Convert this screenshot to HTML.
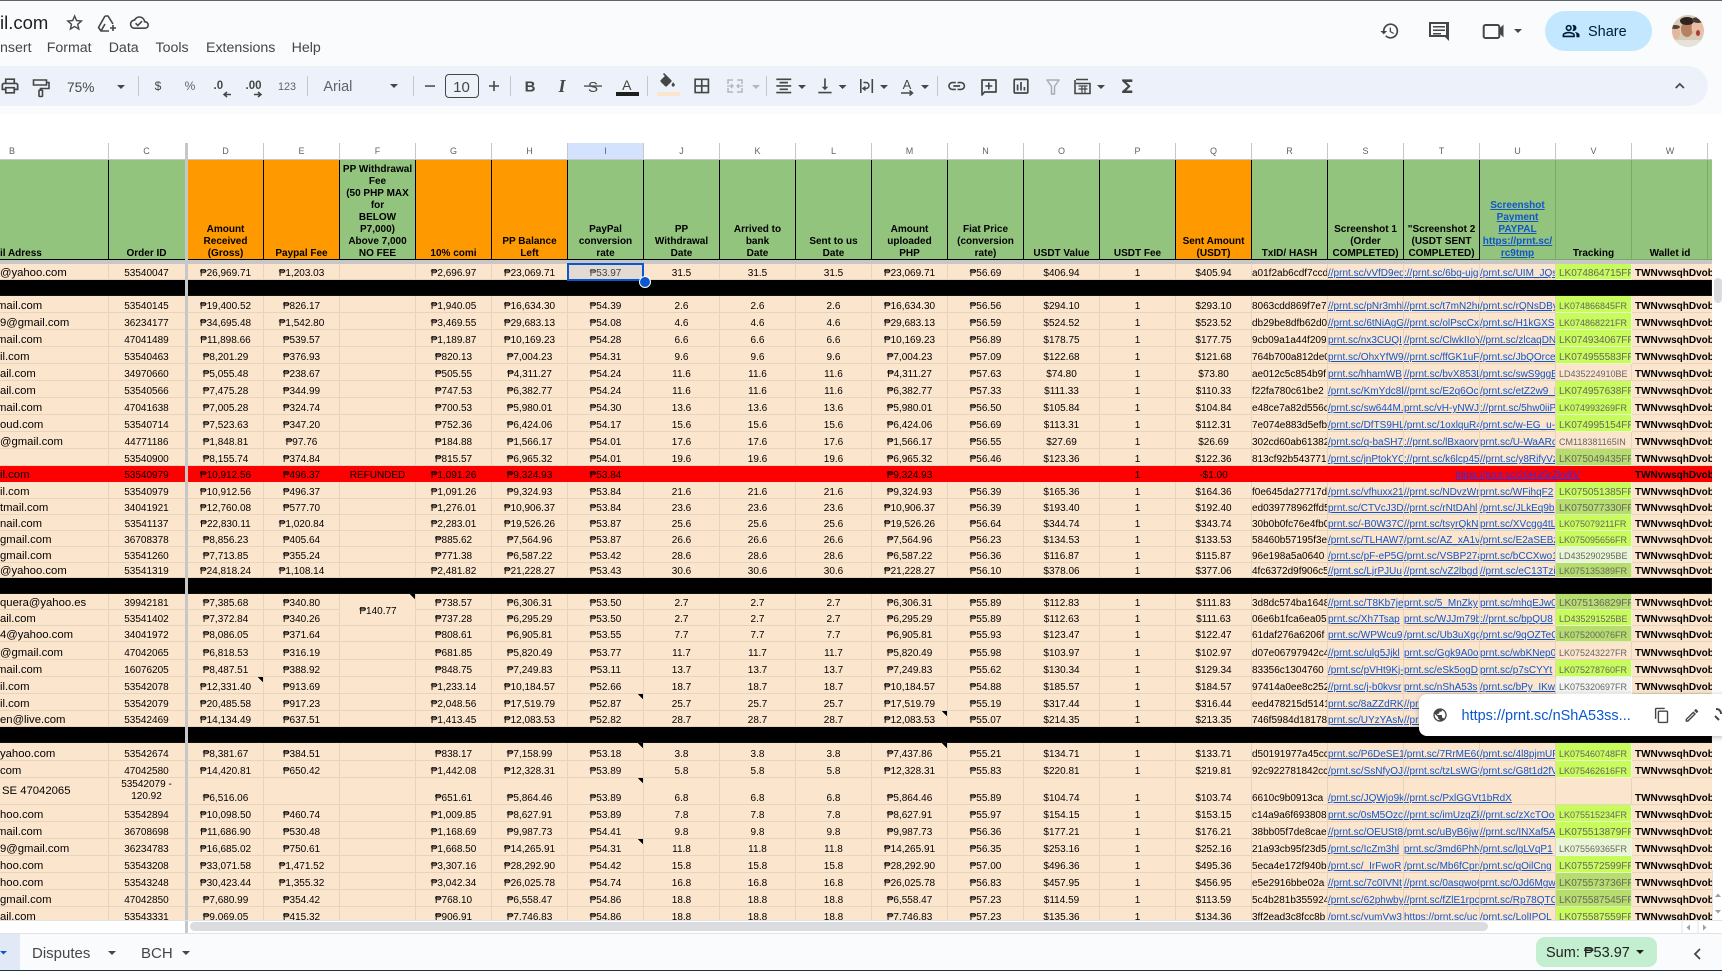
<!DOCTYPE html>
<html><head><meta charset="utf-8"><title>Sheet</title>
<style>
html,body{margin:0;padding:0;width:1722px;height:971px;overflow:hidden;background:#f9fbfd;font-family:"Liberation Sans",Arial,sans-serif}
#wh{position:absolute;left:0;top:114px;width:1722px;height:820px;background:#fff}
#g{position:absolute;left:0;top:143px;width:1712px;height:777px;overflow:hidden;filter:blur(.3px)}
table{border-collapse:separate;border-spacing:0;table-layout:fixed;width:1712px;font:10px/12px "Liberation Sans",Arial,sans-serif;color:#000}
td{padding:0;overflow:hidden;white-space:nowrap;text-align:center;vertical-align:bottom;border-right:1px solid #e6d4bc;border-bottom:1px solid #e6d4bc}
.c td{height:16px;background:#fff;color:#5f6368;font-size:9px;vertical-align:middle;border-top:0;border-right:1px solid #c4c7c5;border-bottom:1px solid #c4c7c5}
.c .on{background:#d3e3fd}
.c td:last-child,.h td:last-child{padding-right:4px;border-right:0}
.h td{height:100px;background:#93c47d;font-weight:bold;white-space:normal;border-right:1px solid #000;border-bottom:0;box-shadow:inset 0 -1px 0 #000}
.h td.o{background:#ff9900}
.h td.u{color:#1155cc;text-decoration:underline;border-right-color:#7ea86a;box-shadow:inset 0 -1px 0 #7ea86a}
.h td.v{border-right-color:#7ea86a;box-shadow:inset 0 -1px 0 #7ea86a;white-space:nowrap}
.h td:first-child{text-align:left;white-space:nowrap}
.f td{height:4px;background:#c7c7c7;border:0;font-size:0;line-height:0}
.d{height:16px;background:#fce5cd}
.s{height:17px}
.d td{background-color:#fce5cd;line-height:11px}
.d td:first-child{text-align:left;font-size:11.3px;line-height:11px}
.d td:nth-child(2){padding-right:3px}
.d td:nth-child(n+17){text-align:left}
.d td:nth-child(18),.d td:nth-child(19),.d td:nth-child(20){color:#1155cc;text-decoration:underline}
.d td:nth-child(21){color:#666;padding-left:3px}
.d td:last-child{font-weight:bold;color:#000;text-decoration:none;border-right:0;padding-left:3px;text-align:left}
.d td.l{background-color:#c8fb5c;border-color:#e9f9c4}
.d td.m{background-color:#b7dd6e;border-color:#dcefb8}
.d td.p{background-color:#e9f6d5;border-color:#f0f6e4}
.d td.w{background-color:#f3f5f2;border-color:#fff}
.d td.t{font-size:9px}
.k{height:16px}
.k td{background:#000;border-color:#111}
.r td{background-color:#f00!important;border-color:#f00!important}
.r td:nth-child(19){text-align:center!important;color:#2f2fe0!important}
.n{background-image:linear-gradient(225deg,#000 3.6px,transparent 3.6px);background-repeat:no-repeat}
.i{text-indent:-3px}
#gut{position:absolute;left:185px;top:143px;width:3px;height:790px;background:#c7c7c7}
#sel{position:absolute;left:567px;top:263px;width:77px;height:18px;box-sizing:border-box;border:2px solid #0b57d0}
#hd{position:absolute;left:639px;top:276px;width:10px;height:10px;border-radius:50%;background:#0b57d0;border:1px solid #fff;box-sizing:content-box}
#fee{position:absolute;left:340px;top:606px;width:76px;text-align:center;font:10px/12px "Liberation Sans",Arial,sans-serif}
#bl{position:absolute;left:0;top:920px;width:1722px;height:1px;background:#e3e3e3}
#th{position:absolute;left:190px;top:922px;width:1298px;height:9px;border-radius:5px;background:#dadce0}
#vt{position:absolute;left:1714px;top:278px;width:8px;height:25px;border-radius:4px;background:#dadce0}
#bot{position:absolute;left:0;top:933px;width:1722px;height:37px;background:#f9fbfd;border-top:1px solid #e3e3e3;box-sizing:border-box}
#end{position:absolute;left:0;top:970px;width:1722px;height:1px;background:#1c3440}
#top{position:absolute;left:0;top:0;width:1722px;height:1px;background:#5f6368}
#ov{position:absolute;left:0;top:0;z-index:5}
#ov text{font-family:"Liberation Sans",Arial,sans-serif}
</style></head><body>
<div id="wh"></div>
<div id="g"><table>
<colgroup><col style="width:109px"><col style="width:79px"><col span="19" style="width:76px"><col style="width:80px"></colgroup>
<tr class="c"><td style="text-align:left;padding-left:9px">B<td style="padding-right:3px">C<td>D<td>E<td>F<td>G<td>H<td class="on">I<td>J<td>K<td>L<td>M<td>N<td>O<td>P<td>Q<td>R<td>S<td>T<td>U<td>V<td>W</tr>
<tr class="h"><td>il Adress<td style="padding-right:3px">Order ID<td class="o">Amount<br>Received<br>(Gross)<td class="o">Paypal Fee<td>PP Withdrawal<br>Fee<br>(50 PHP MAX<br>for<br>BELOW<br>P7,000)<br>Above 7,000<br>NO FEE<td class="o">10% comi<td class="o">PP Balance<br>Left<td>PayPal<br>conversion<br>rate<td>PP<br>Withdrawal<br>Date<td>Arrived to<br>bank<br>Date<td>Sent to us<br>Date<td>Amount<br>uploaded<br>PHP<td>Fiat Price<br>(conversion<br>rate)<td>USDT Value<td>USDT Fee<td class="o">Sent Amount<br>(USDT)<td>TxID/ HASH<td>Screenshot 1<br>(Order<br>COMPLETED)<td>"Screenshot 2<br>(USDT SENT<br>COMPLETED)<td class="u">Screenshot<br>Payment<br>PAYPAL<br>https://prnt.sc/<br>rc9tmp<td class="v">Tracking<td class="v">Wallet id</tr>
<tr class="f"><td colspan="22"></tr>
<tr class="d"><td>@yahoo.com<td>53540047<td>₱26,969.71<td>₱1,203.03<td><td>₱2,696.97<td>₱23,069.71<td style="background-color:#e3dbd3;color:#444">₱53.97<td>31.5<td>31.5<td>31.5<td>₱23,069.71<td>₱56.69<td>$406.94<td>1<td style="text-align:center">$405.94<td>a01f2ab6cdf7ccd<td>//prnt.sc/vVfD9ed<td>://prnt.sc/6bg-ujg<td>/prnt.sc/UIM_JQs<td class="l">LK074864715FF<td>TWNvwsqhDvob</tr>
<tr class="k"><td colspan="22"></tr>
<tr class="d s"><td class="i">mail.com<td>53540145<td>₱19,400.52<td>₱826.17<td><td>₱1,940.05<td>₱16,634.30<td>₱54.39<td>2.6<td>2.6<td>2.6<td>₱16,634.30<td>₱56.56<td>$294.10<td>1<td style="text-align:center">$293.10<td>8063cdd869f7e7<td>//prnt.sc/pNr3mhl<td>//prnt.sc/t7mN2hr<td>/prnt.sc/rQNsDBy<td class="l t">LK074866845FR<td>TWNvwsqhDvob</tr>
<tr class="d s"><td>9@gmail.com<td>36234177<td>₱34,695.48<td>₱1,542.80<td><td>₱3,469.55<td>₱29,683.13<td>₱54.08<td>4.6<td>4.6<td>4.6<td>₱29,683.13<td>₱56.59<td>$524.52<td>1<td style="text-align:center">$523.52<td>db29be8dfb62d09<td>//prnt.sc/6tNiAgG<td>//prnt.sc/olPscCx<td>/prnt.sc/H1kGXS<td class="l t">LK074868221FR<td>TWNvwsqhDvob</tr>
<tr class="d s"><td class="i">mail.com<td>47041489<td>₱11,898.66<td>₱539.57<td><td>₱1,189.87<td>₱10,169.23<td>₱54.28<td>6.6<td>6.6<td>6.6<td>₱10,169.23<td>₱56.89<td>$178.75<td>1<td style="text-align:center">$177.75<td>9cb09a1a44f209a<td>prnt.sc/nx3CUQI<td>//prnt.sc/ClwkIIoY<td>//prnt.sc/zlcaqDN<td class="l">LK074934067FF<td>TWNvwsqhDvob</tr>
<tr class="d s"><td>il.com<td>53540463<td>₱8,201.29<td>₱376.93<td><td>₱820.13<td>₱7,004.23<td>₱54.31<td>9.6<td>9.6<td>9.6<td>₱7,004.23<td>₱57.09<td>$122.68<td>1<td style="text-align:center">$121.68<td>764b700a812de0<td>prnt.sc/OhxYfW9<td>//prnt.sc/ffGK1uF<td>/prnt.sc/JbQOrce<td class="l">LK074955583FF<td>TWNvwsqhDvob</tr>
<tr class="d s"><td>ail.com<td>34970660<td>₱5,055.48<td>₱238.67<td><td>₱505.55<td>₱4,311.27<td>₱54.24<td>11.6<td>11.6<td>11.6<td>₱4,311.27<td>₱57.63<td>$74.80<td>1<td style="text-align:center">$73.80<td>ae012c5c854b9f<td>prnt.sc/hhamWB<td>//prnt.sc/bvX853L<td>/prnt.sc/swS9ggB<td class="t">LD435224910BE<td>TWNvwsqhDvob</tr>
<tr class="d s"><td>ail.com<td>53540566<td>₱7,475.28<td>₱344.99<td><td>₱747.53<td>₱6,382.77<td>₱54.24<td>11.6<td>11.6<td>11.6<td>₱6,382.77<td>₱57.33<td>$111.33<td>1<td style="text-align:center">$110.33<td>f22fa780c61be2<td>/prnt.sc/KmYdc8k<td>//prnt.sc/E2q6Oc<td>/prnt.sc/etZ2w9_I<td class="l">LK074957638FF<td>TWNvwsqhDvob</tr>
<tr class="d s"><td class="i">mail.com<td>47041638<td>₱7,005.28<td>₱324.74<td><td>₱700.53<td>₱5,980.01<td>₱54.30<td>13.6<td>13.6<td>13.6<td>₱5,980.01<td>₱56.50<td>$105.84<td>1<td style="text-align:center">$104.84<td>e48ce7a82d556c<td>/prnt.sc/sw644M.<td>prnt.sc/vH-yNWJ<td>://prnt.sc/5hw0iiP<td class="l t">LK074993269FR<td>TWNvwsqhDvob</tr>
<tr class="d s"><td>oud.com<td>53540714<td>₱7,523.63<td>₱347.20<td><td>₱752.36<td>₱6,424.06<td>₱54.17<td>15.6<td>15.6<td>15.6<td>₱6,424.06<td>₱56.69<td>$113.31<td>1<td style="text-align:center">$112.31<td>7e074e883d5efbf<td>/prnt.sc/DfTS9HL<td>/prnt.sc/1oxlquR4<td>/prnt.sc/w-EG_u-1<td class="l">LK074995154FF<td>TWNvwsqhDvob</tr>
<tr class="d s"><td>@gmail.com<td class="n" style="background-position:right -3px top 0">44771186<td>₱1,848.81<td>₱97.76<td><td>₱184.88<td>₱1,566.17<td>₱54.01<td>17.6<td>17.6<td>17.6<td>₱1,566.17<td>₱56.55<td>$27.69<td>1<td style="text-align:center">$26.69<td>302cd60ab61382<td>/prnt.sc/q-baSH7<td>://prnt.sc/lBxaorv<td>prnt.sc/U-WaARc<td class="t">CM118381165IN<td>TWNvwsqhDvob</tr>
<tr class="d s"><td><td>53540900<td>₱8,155.74<td>₱374.84<td><td>₱815.57<td>₱6,965.32<td>₱54.01<td>19.6<td>19.6<td>19.6<td>₱6,965.32<td>₱56.46<td>$123.36<td>1<td style="text-align:center">$122.36<td>813cf92b543771<td>/prnt.sc/jnPtokYC<td>://prnt.sc/k6lcp45<td>//prnt.sc/y8RifyVz<td class="m">LK075049435FF<td>TWNvwsqhDvob</tr>
<tr class="d r"><td>il.com<td>53540979<td>₱10,912.56<td>₱496.37<td>REFUNDED<td>₱1,091.26<td>₱9,324.93<td>₱53.84<td><td><td><td>₱9,324.93<td><td><td>1<td style="text-align:center">-$1.00<td><td><td colspan="3">https://prnt.sc/20H3SrZkvlfV<td>TWNvwsqhDvob</tr>
<tr class="d s"><td>il.com<td>53540979<td>₱10,912.56<td>₱496.37<td><td>₱1,091.26<td>₱9,324.93<td>₱53.84<td>21.6<td>21.6<td>21.6<td>₱9,324.93<td>₱56.39<td>$165.36<td>1<td style="text-align:center">$164.36<td>f0e645da27717d<td>/prnt.sc/vfhuxx21<td>//prnt.sc/NDvzWn<td>prnt.sc/WFihqF2<td class="l">LK075051385FF<td>TWNvwsqhDvob</tr>
<tr class="d"><td>tmail.com<td>34041921<td>₱12,760.08<td>₱577.70<td><td>₱1,276.01<td>₱10,906.37<td>₱53.84<td>23.6<td>23.6<td>23.6<td>₱10,906.37<td>₱56.39<td>$193.40<td>1<td style="text-align:center">$192.40<td>ed039778962ffd5<td>prnt.sc/CTVcJ3D<td>//prnt.sc/rNtDAhl<td>/prnt.sc/JLkEq9b<td class="m">LK075077330FF<td>TWNvwsqhDvob</tr>
<tr class="d"><td>nail.com<td>53541137<td>₱22,830.11<td>₱1,020.84<td><td>₱2,283.01<td>₱19,526.26<td>₱53.87<td>25.6<td>25.6<td>25.6<td>₱19,526.26<td>₱56.64<td>$344.74<td>1<td style="text-align:center">$343.74<td>30b0b0fc76e4fb0<td>prnt.sc/-B0W37C<td>//prnt.sc/tsyrQkN<td>prnt.sc/XVcgg4tL<td class="l t">LK075079211FR<td>TWNvwsqhDvob</tr>
<tr class="d"><td>gmail.com<td>36708378<td>₱8,856.23<td>₱405.64<td><td>₱885.62<td>₱7,564.96<td>₱53.87<td>26.6<td>26.6<td>26.6<td>₱7,564.96<td>₱56.23<td>$134.53<td>1<td style="text-align:center">$133.53<td>58460b57195f3e<td>/prnt.sc/TLHAW7<td>/prnt.sc/AZ_xA1v<td>/prnt.sc/E2aSEBz<td class="l t">LK075095656FR<td>TWNvwsqhDvob</tr>
<tr class="d"><td>gmail.com<td>53541260<td>₱7,713.85<td>₱355.24<td><td>₱771.38<td>₱6,587.22<td>₱53.42<td>28.6<td>28.6<td>28.6<td>₱6,587.22<td>₱56.36<td>$116.87<td>1<td style="text-align:center">$115.87<td>96e198a5a0640<td>/prnt.sc/pF-eP5G<td>/prnt.sc/VSBP27a<td>prnt.sc/bCCXwo1<td class="p t">LD435290295BE<td>TWNvwsqhDvob</tr>
<tr class="d" style="height:15px"><td>@yahoo.com<td>53541319<td>₱24,818.24<td>₱1,108.14<td><td>₱2,481.82<td>₱21,228.27<td>₱53.43<td>30.6<td>30.6<td>30.6<td>₱21,228.27<td>₱56.10<td>$378.06<td>1<td style="text-align:center">$377.06<td>4fc6372d9f906c5<td>//prnt.sc/LjrPJUu<td>//prnt.sc/vZ2lbgd<td>//prnt.sc/eC13Tzi<td class="m t">LK075135389FR<td>TWNvwsqhDvob</tr>
<tr class="k"><td colspan="22"></tr>
<tr class="d"><td>quera@yahoo.es<td>39942181<td>₱7,385.68<td>₱340.80<td class="n" style="border-bottom-color:#fce5cd"><td>₱738.57<td>₱6,306.31<td>₱53.50<td>2.7<td>2.7<td>2.7<td>₱6,306.31<td>₱55.89<td>$112.83<td>1<td style="text-align:center">$111.83<td>3d8dc574ba1648<td>//prnt.sc/T8Kb7je<td>prnt.sc/5_MnZky<td>prnt.sc/mhqEJw0<td class="m">LK075136829FF<td>TWNvwsqhDvob</tr>
<tr class="d"><td>ail.com<td>53541402<td>₱7,372.84<td>₱340.26<td><td>₱737.28<td>₱6,295.29<td>₱53.50<td>2.7<td>2.7<td>2.7<td>₱6,295.29<td>₱55.89<td>$112.63<td>1<td style="text-align:center">$111.63<td>06e6b1fca6ea05<td>prnt.sc/Xh7Tsap<td>prnt.sc/WJJm79b<td>://prnt.sc/bpQU8<td class="l t">LD435291525BE<td>TWNvwsqhDvob</tr>
<tr class="d"><td>4@yahoo.com<td>34041972<td>₱8,086.05<td>₱371.64<td><td>₱808.61<td>₱6,905.81<td>₱53.55<td>7.7<td>7.7<td>7.7<td>₱6,905.81<td>₱55.93<td>$123.47<td>1<td style="text-align:center">$122.47<td>61daf276a6206f<td>prnt.sc/WPWcu9<td>/prnt.sc/Ub3uXgg<td>/prnt.sc/9qOZTeC<td class="m t">LK075200076FR<td>TWNvwsqhDvob</tr>
<tr class="d" style="height:18px"><td>@gmail.com<td class="n" style="background-position:right -3px top 0">47042065<td>₱6,818.53<td>₱316.19<td><td>₱681.85<td>₱5,820.49<td>₱53.77<td>11.7<td>11.7<td>11.7<td>₱5,820.49<td>₱55.98<td>$103.97<td>1<td style="text-align:center">$102.97<td>d07e06797942c4<td>//prnt.sc/ulg5Jjkl<td>prnt.sc/Ggk9A0o<td>prnt.sc/wbKNep0<td class="t">LK075243227FR<td>TWNvwsqhDvob</tr>
<tr class="d s"><td class="i">mail.com<td>16076205<td>₱8,487.51<td>₱388.92<td><td>₱848.75<td>₱7,249.83<td>₱53.11<td>13.7<td>13.7<td>13.7<td>₱7,249.83<td>₱55.62<td>$130.34<td>1<td style="text-align:center">$129.34<td>83356c1304760<td>/prnt.sc/pVHt9Kj-<td>prnt.sc/eSk5ogD<td>prnt.sc/p7sCYYt<td class="l t">LK075278760FR<td>TWNvwsqhDvob</tr>
<tr class="d s"><td>il.com<td>53542078<td class="n">₱12,331.40<td>₱913.69<td><td>₱1,233.14<td>₱10,184.57<td>₱52.66<td>18.7<td>18.7<td>18.7<td>₱10,184.57<td>₱54.88<td>$185.57<td>1<td style="text-align:center">$184.57<td>97414a0ee8c252<td>//prnt.sc/j-b0kvsr<td>prnt.sc/nShA53s<td>/prnt.sc/bPy_IKw<td class="w t">LK075320697FR<td>TWNvwsqhDvob</tr>
<tr class="d s"><td>il.com<td>53542079<td>₱20,485.58<td>₱917.23<td><td>₱2,048.56<td>₱17,519.79<td class="n">₱52.87<td>25.7<td>25.7<td>25.7<td>₱17,519.79<td>₱55.19<td>$317.44<td>1<td style="text-align:center">$316.44<td>eed478215d5141<td>prnt.sc/8aZZdRK<td>//prnt.sc/mGk2<td><td><td>TWNvwsqhDvob</tr>
<tr class="d"><td>en@live.com<td>53542469<td>₱14,134.49<td>₱637.51<td><td>₱1,413.45<td>₱12,083.53<td>₱52.82<td>28.7<td>28.7<td>28.7<td class="n">₱12,083.53<td>₱55.07<td>$214.35<td>1<td style="text-align:center">$213.35<td>746f5984d18178<td>prnt.sc/UYzYAsM<td>//prnt.sc/pL4q<td><td><td>TWNvwsqhDvob</tr>
<tr class="k"><td colspan="22"></tr>
<tr class="d" style="height:18px"><td>yahoo.com<td>53542674<td>₱8,381.67<td>₱384.51<td><td>₱838.17<td>₱7,158.99<td class="n">₱53.18<td>3.8<td>3.8<td>3.8<td class="n">₱7,437.86<td>₱55.21<td>$134.71<td>1<td style="text-align:center">$133.71<td>d50191977a45cc<td>prnt.sc/P6DeSE1<td>/prnt.sc/7RrME6C<td>/prnt.sc/4l8pjmUF<td class="l t">LK075460748FR<td>TWNvwsqhDvob</tr>
<tr class="d s"><td>com<td>47042580<td>₱14,420.81<td>₱650.42<td><td>₱1,442.08<td>₱12,328.31<td>₱53.89<td>5.8<td>5.8<td>5.8<td>₱12,328.31<td>₱55.83<td>$220.81<td>1<td style="text-align:center">$219.81<td>92c922781842cc<td>/prnt.sc/SsNfyOJ<td>//prnt.sc/tzLsWGv<td>/prnt.sc/G8t1d2fV<td class="l t">LK075462616FR<td>TWNvwsqhDvob</tr>
<tr class="d" style="height:27px"><td style="vertical-align:middle;padding-left:2px">SE 47042065<td style="white-space:normal;vertical-align:middle;line-height:12px">53542079 -<br>120.92<td>₱6,516.06<td><td><td>₱651.61<td>₱5,864.46<td class="n">₱53.89<td>6.8<td>6.8<td>6.8<td>₱5,864.46<td>₱55.89<td>$104.74<td>1<td style="text-align:center">$103.74<td>6610c9b0913ca<td>/prnt.sc/JQWjo9k<td colspan="2">//prnt.sc/PxlGGVt1bRdX<td style="background-color:#fce5cd"><td>TWNvwsqhDvob</tr>
<tr class="d s"><td>hoo.com<td>53542894<td>₱10,098.50<td>₱460.74<td><td>₱1,009.85<td>₱8,627.91<td>₱53.89<td>7.8<td>7.8<td>7.8<td>₱8,627.91<td>₱55.97<td>$154.15<td>1<td style="text-align:center">$153.15<td>c14a9a6f693808<td>prnt.sc/0sM5Ozc<td>//prnt.sc/imUzqZk<td>//prnt.sc/zXcTOo-<td class="l t">LK075515234FR<td>TWNvwsqhDvob</tr>
<tr class="d s"><td class="i">mail.com<td>36708698<td>₱11,686.90<td>₱530.48<td><td>₱1,168.69<td>₱9,987.73<td>₱54.41<td>9.8<td>9.8<td>9.8<td>₱9,987.73<td>₱56.36<td>$177.21<td>1<td style="text-align:center">$176.21<td>38bb05f7de8cae6<td>//prnt.sc/OEUSt8<td>/prnt.sc/uByB6jw<td>//prnt.sc/INXaf5A<td class="l">LK075513879FF<td>TWNvwsqhDvob</tr>
<tr class="d s"><td>9@gmail.com<td>36234783<td>₱16,685.02<td>₱750.61<td><td>₱1,668.50<td>₱14,265.91<td class="n">₱54.31<td>11.8<td>11.8<td>11.8<td>₱14,265.91<td>₱56.35<td>$253.16<td>1<td style="text-align:center">$252.16<td>21a93cb95f23d59<td>/prnt.sc/IcZm3hl<td>prnt.sc/3md6PhN<td>/prnt.sc/lgLVqP1<td class="p t">LK075569365FR<td>TWNvwsqhDvob</tr>
<tr class="d s"><td>hoo.com<td>53543208<td>₱33,071.58<td>₱1,471.52<td><td>₱3,307.16<td>₱28,292.90<td>₱54.42<td>15.8<td>15.8<td>15.8<td>₱28,292.90<td>₱57.00<td>$496.36<td>1<td style="text-align:center">$495.36<td>5eca4e172f940b<td>/prnt.sc/_IrFwoR<td>/prnt.sc/Mb6fCprs<td>/prnt.sc/qOilCng<td class="l">LK075572599FF<td>TWNvwsqhDvob</tr>
<tr class="d s"><td>hoo.com<td>53543248<td>₱30,423.44<td>₱1,355.32<td><td>₱3,042.34<td>₱26,025.78<td>₱54.74<td>16.8<td>16.8<td>16.8<td>₱26,025.78<td>₱56.83<td>$457.95<td>1<td style="text-align:center">$456.95<td>e5e2916bbe02a<td>//prnt.sc/7c0IVNt<td>//prnt.sc/0asqwo6<td>prnt.sc/0Jd6Mgw<td class="m">LK075573736FF<td>TWNvwsqhDvob</tr>
<tr class="d s"><td>gmail.com<td>47042850<td>₱7,680.99<td>₱354.42<td><td>₱768.10<td>₱6,558.47<td>₱54.86<td>18.8<td>18.8<td>18.8<td>₱6,558.47<td>₱57.23<td>$114.59<td>1<td style="text-align:center">$113.59<td>5c4b281b355924<td>/prnt.sc/62phwby<td>//prnt.sc/fZlE1rpc<td>prnt.sc/Rp78QTC<td class="m">LK075587545FF<td>TWNvwsqhDvob</tr>
<tr class="d s"><td>ail.com<td>53543331<td>₱9,069.05<td>₱415.32<td><td>₱906.91<td>₱7,746.83<td>₱54.86<td>18.8<td>18.8<td>18.8<td>₱7,746.83<td>₱57.23<td>$135.36<td>1<td style="text-align:center">$134.36<td>3ff2ead3c8fcc8b<td>/prnt.sc/yumVw3<td>https://prnt.sc/uc<td>/prnt.sc/LolIPQL<td class="l">LK075587559FF<td>TWNvwsqhDvob</tr>
</table></div>
<div id="fee">₱140.77</div>
<div id="gut"></div>
<div id="sel"></div>
<div id="hd"></div>
<div id="bl"></div>
<div id="th"></div>
<div id="vt"></div>
<div id="bot"></div>
<div id="end"></div>
<div id="top"></div>
<svg id="ov" width="1722" height="971" viewBox="0 0 1722 971" xmlns="http://www.w3.org/2000/svg">
<defs>
<clipPath id="av"><circle cx="1688" cy="31" r="16"/></clipPath>
<filter id="sh" x="-5%" y="-30%" width="110%" height="170%"><feDropShadow dx="0" dy="1" stdDeviation="3" flood-color="#000" flood-opacity=".28"/></filter>
</defs>
<!-- W right edge in header rows -->
<rect x="1707" y="143" width="1" height="17" fill="#c4c7c5"/>
<rect x="1707" y="160" width="1" height="100" fill="#7ea86a"/>
<!-- title -->
<text x="0" y="29" font-size="18.5" fill="#1f1f1f">il.com</text>
<g fill="#444746">
<path transform="translate(64.4 12.6) scale(.85)" d="M22 9.24l-7.19-.62L12 2 9.19 8.63 2 9.24l5.46 4.73L5.82 21 12 17.27 18.18 21l-1.63-7.03L22 9.24zM12 15.4l-3.76 2.27 1-4.28-3.32-2.88 4.38-.38L12 6.1l1.71 4.04 4.38.38-3.32 2.88 1 4.28L12 15.4z"/>
<path transform="translate(129.8 13) scale(.8)" d="M19.35 10.04C18.67 6.59 15.64 4 12 4 9.11 4 6.6 5.64 5.35 8.04 2.34 8.36 0 10.91 0 14c0 3.31 2.69 6 6 6h13c2.76 0 5-2.24 5-5 0-2.64-2.05-4.78-4.65-4.96zM19 18H6c-2.21 0-4-1.79-4-4 0-2.05 1.53-3.76 3.56-3.97l1.07-.11.5-.95C8.08 7.14 9.94 6 12 6c2.62 0 4.88 1.86 5.39 4.43l.3 1.5 1.53.11c1.56.1 2.78 1.41 2.78 2.96 0 1.65-1.35 3-3 3zm-9-3.82l-2.09-2.09L6.5 13.5 10 17l6.01-6.01-1.41-1.41z"/>
</g>
<path d="M105 16l-6.5 11.5 2.5 3.5h8M105 16h3l5 8M101 31l4-7" fill="none" stroke="#444746" stroke-width="1.6" stroke-linejoin="round"/>
<path d="M113 25v6M110 28h6" stroke="#444746" stroke-width="1.6"/>
<!-- menu -->
<g font-size="14.2" fill="#444746">
<text x="0" y="52">nsert</text><text x="46.7" y="52">Format</text><text x="108.7" y="52">Data</text><text x="155.5" y="52">Tools</text><text x="206" y="52">Extensions</text><text x="291.6" y="52">Help</text>
</g>
<!-- toolbar pill -->
<rect x="-40" y="66" width="1748" height="40" rx="20" fill="#edf2fa"/>
<g fill="#444746">
<path transform="translate(-.2 75.8) scale(.85)" d="M19 8h-1V3H6v5H5c-1.66 0-3 1.34-3 3v6h4v4h12v-4h4v-6c0-1.66-1.34-3-3-3zM8 5h8v3H8V5zm8 12v2H8v-4h8v2zm2-2v-2H6v2H4v-4c0-.55.45-1 1-1h14c.55 0 1 .45 1 1v4h-2z"/>
<text x="67" y="92" font-size="13.7">75%</text>
<path d="M117 85h8l-4 4zM390 84h8l-4 4zM798 85h8l-4 4zM838.6 85h8l-4 4zM880 85h8l-4 4zM921 85h8l-4 4zM1097 85h8l-4 4z"/>
<text x="158" y="90" font-size="12" text-anchor="middle">$</text>
<text x="190" y="90" font-size="12" text-anchor="middle" fill="#5f6368">%</text>
<text x="213.5" y="89" font-size="11.5" font-weight="bold" fill="#444746">.0</text>
<path d="M231 94.5h-6M227 92l-3 2.5 3 2.5" fill="none" stroke="#444746" stroke-width="1.5"/>
<text x="245.5" y="89" font-size="11.5" font-weight="bold" fill="#444746">.00</text>
<path d="M254 94.5h7M258 92l3 2.5-3 2.5" fill="none" stroke="#444746" stroke-width="1.5"/>
<text x="287" y="90" font-size="10.8" text-anchor="middle" fill="#5f6368">123</text>
<text x="323.4" y="91" font-size="14.5" fill="#5f6368">Arial</text>
<rect x="425" y="85.3" width="10" height="1.5"/>
<text x="461.5" y="92" font-size="15" text-anchor="middle">10</text>
<path d="M489 85.2h4.2V81h1.6v4.2H499v1.600h-4.2V91h-1.600v-4.200H489z"/>
<text x="530" y="91.5" font-size="15" font-weight="bold" text-anchor="middle">B</text>
<text x="562" y="92" font-size="18" font-weight="bold" font-style="italic" text-anchor="middle" style="font-family:'Liberation Serif',serif">I</text>
<text x="593" y="92" font-size="15" text-anchor="middle">S</text>
<rect x="584" y="85.4" width="18" height="1.3"/>
<text x="626.8" y="90" font-size="14" text-anchor="middle">A</text>
<rect x="616" y="92" width="23" height="4" fill="#1f1f1f"/>
<path transform="translate(658 73) scale(.8)" d="M16.56 8.94L7.62 0 6.21 1.41l2.38 2.38-5.15 5.15c-.59.59-.59 1.54 0 2.12l5.5 5.5c.29.29.68.44 1.06.44s.77-.15 1.06-.44l5.5-5.5c.59-.58.59-1.53 0-2.12zM19 11.5s-2 2.17-2 3.5c0 1.1.9 2 2 2s2-.9 2-2c0-1.33-2-3.5-2-3.5z"/>
<rect x="657" y="92" width="23" height="4" fill="#fce5cd"/>
<path transform="translate(691.8 76) scale(.83)" d="M3 3v18h18V3H3zm8 16H5v-6h6v6zm0-8H5V5h6v6zm8 8h-6v-6h6v6zm0-8h-6V5h6v6z"/>
<path transform="translate(773.8 76) scale(.83)" d="M7 15v2h10v-2H7zm-4 6h18v-2H3v2zm0-8h18v-2H3v2zm4-6v2h10V7H7zM3 3v2h18V3H3z"/>
<path transform="translate(815 76) scale(.83)" d="M16 13h-3V3h-2v10H8l4 4 4-4zM4 19v2h16v-2H4z"/>
<path d="M860 79h1.6v14H860zM871.500 79h1.600v14H871.500z"/>
<path d="M864 83h2.500a3 3 0 0 1 0 6h-2.500M866 87l-2.500 2 2.500 2" fill="none" stroke="#444746" stroke-width="1.400" transform="translate(-.5 -.5)"/>
<text x="907" y="89" font-size="13" text-anchor="middle">A</text>
<path d="M901 93h11M909.5 90.5l3 2.5-3 2.500" fill="none" stroke="#444746" stroke-width="1.5"/>
<path transform="translate(946.5 75.8) scale(.85)" d="M3.9 12c0-1.71 1.39-3.1 3.1-3.1h4V7H7c-2.76 0-5 2.24-5 5s2.24 5 5 5h4v-1.9H7c-1.71 0-3.1-1.39-3.1-3.1zM8 13h8v-2H8v2zm9-6h-4v1.900h4c1.71 0 3.1 1.39 3.1 3.1s-1.39 3.1-3.1 3.1h-4V17h4c2.76 0 5-2.24 5-5s-2.24-5-5-5z"/>
<path transform="translate(1010.8 76) scale(.85)" d="M19 3H5c-1.1 0-2 .9-2 2v14c0 1.1.9 2 2 2h14c1.1 0 2-.9 2-2V5c0-1.1-.9-2-2-2zm0 16H5V5h14v14zM7 10h2v7H7zm4-3h2v10h-2zm4 6h2v4h-2z"/>
<path transform="translate(1117 76) scale(.85)" d="M18 4H6v2l6.5 6L6 18v2h12v-3h-7l5-5-5-5h7z"/>
<path transform="translate(1379.5 20.8) scale(.85)" d="M13 3c-4.97 0-9 4.03-9 9H1l3.89 3.89.07.14L9 12H6c0-3.87 3.13-7 7-7s7 3.13 7 7-3.13 7-7 7c-1.93 0-3.68-.79-4.94-2.06l-1.42 1.42C8.27 19.99 10.51 21 13 21c4.97 0 9-4.03 9-9s-4.03-9-9-9zm-1 5v5l4.28 2.54.72-1.21-3.5-2.08V8H12z"/>
<path d="M1429 22h20v19l-4-4h-16zM1431 24v11h15v1.500V24zM1433 26h12v1.500h-12zM1433 29.500h12v1.500h-12z" fill-rule="evenodd"/>
<path d="M1433 33h8v1.5h-8z"/>
<path d="M1514 29h8l-4 4z"/>
<path d="M1679.800 85.100l-3.500 3.500-1.200-1.200 4.700-4.700 4.700 4.700-1.200 1.200z"/>
</g>
<rect x="445.5" y="74.5" width="33" height="23" rx="3.5" fill="none" stroke="#444746" stroke-width="1"/>
<!-- separators -->
<g fill="#c7c7c7">
<rect x="138" y="76" width="1" height="20"/><rect x="307" y="76" width="1" height="20"/><rect x="413" y="76" width="1" height="20"/><rect x="510" y="76" width="1" height="20"/><rect x="647" y="76" width="1" height="20"/><rect x="766" y="76" width="1" height="20"/><rect x="937" y="76" width="1" height="20"/>
</g>
<!-- paint format -->
<path d="M33.5 80h13v5h-13zM46.5 82.500h2.500v6h-8.500v2.500" fill="none" stroke="#444746" stroke-width="1.6"/>
<rect x="39" y="90" width="3.5" height="6.5" rx=".7" fill="none" stroke="#444746" stroke-width="1.6"/>
<!-- merge (disabled) -->
<path d="M733 80h-5v4M728 88v4h5M737 80h5v4M742 88v4h-5" fill="none" stroke="#b4b7ba" stroke-width="1.5"/>
<path d="M727 86h6M731 84l2 2-2 2M743 86h-6M739 84l-2 2 2 2" fill="none" stroke="#b4b7ba" stroke-width="1.3"/>
<path d="M752 85h8l-4 4z" fill="#b4b7ba"/>
<!-- comment add -->
<path d="M982 80h14v12h-11.500l-2.500 3z" fill="none" stroke="#444746" stroke-width="1.7" stroke-linejoin="round"/>
<path d="M988.8 82.500v7M985.3 86h7" stroke="#444746" stroke-width="1.6"/>
<!-- filter -->
<path d="M1047 80h12l-4.500 6.500v7.500h-3v-7.500z" fill="none" stroke="#a9acb0" stroke-width="1.5" stroke-linejoin="round"/>
<!-- table fn -->
<path d="M1076 79.500h12M1075 80v13.500h15V83.500h-14" fill="none" stroke="#444746" stroke-width="1.6"/>
<path d="M1078.5 86h9M1078.5 89h9M1082 86v7M1085 86v7" stroke="#444746" stroke-width="1.2"/>
<!-- video -->
<path d="M1485.5 26h12a1.800 1.800 0 0 1 1.800 1.800v9.400a1.800 1.800 0 0 1-1.800 1.800h-12a1.800 1.800 0 0 1-1.800-1.800v-9.400a1.800 1.800 0 0 1 1.800-1.800z" fill="none" stroke="#444746" stroke-width="2" transform="translate(0 -1)"/>
<path d="M1500 29l3.500-3.500v13l-3.500-3.500z" fill="#444746" transform="translate(0 -1)"/>
<!-- share -->
<rect x="1545" y="11" width="107" height="40" rx="20" fill="#c2e7ff"/>
<path transform="translate(1561.8 21.8) scale(.77)" fill="#001d35" d="M16.67 13.13C18.04 14.06 19 15.32 19 17v3h4v-3c0-2.18-3.57-3.47-6.33-3.87zM15 12c2.21 0 4-1.79 4-4s-1.79-4-4-4c-.47 0-.91.1-1.33.24C14.5 5.27 15 6.58 15 8s-.5 2.73-1.33 3.76c.42.14.86.24 1.33.24zM9 12c2.21 0 4-1.79 4-4s-1.79-4-4-4-4 1.79-4 4 1.79 4 4 4zm0-6c1.1 0 2 .9 2 2s-.9 2-2 2-2-.9-2-2 .9-2 2-2zM9 13c-2.67 0-8 1.34-8 4v3h16v-3c0-2.66-5.33-4-8-4zm6 5H3v-.99C3.2 16.29 6.3 15 9 15s5.8 1.29 6 2v1z"/>
<text x="1588" y="36" font-size="14.5" fill="#001d35">Share</text>
<!-- avatar -->
<g clip-path="url(#av)">
<rect x="1672" y="15" width="32" height="32" fill="#d8ccb6"/>
<ellipse cx="1675" cy="33" rx="5" ry="6.500" fill="#e3b99d"/>
<ellipse cx="1675" cy="27" rx="5" ry="2" fill="#5a4334"/>
<ellipse cx="1687" cy="29" rx="6" ry="8" fill="#b97f62"/>
<ellipse cx="1687" cy="21" rx="7" ry="4" fill="#2f241f"/>
<ellipse cx="1698" cy="28" rx="6.500" ry="8" fill="#e9bfa4"/>
<ellipse cx="1698" cy="20" rx="6" ry="3" fill="#4a3b38"/>
<rect x="1672" y="40" width="32" height="8" fill="#e6e2da"/>
<ellipse cx="1698" cy="33" rx="2" ry="3" fill="#a83b3f"/>
</g>
<!-- popup -->
<rect x="1419" y="694" width="340" height="42" rx="8" fill="#fff" filter="url(#sh)"/>
<path transform="translate(1432 707) scale(.67)" fill="#444746" d="M12 2C6.48 2 2 6.48 2 12s4.48 10 10 10 10-4.48 10-10S17.52 2 12 2zM4 12c0-.61.08-1.21.21-1.78L8.99 15v1c0 1.1.9 2 2 2v1.93C7.06 19.43 4 16.07 4 12zm13.89 5.4c-.26-.81-1-1.4-1.9-1.4h-1v-3c0-.55-.45-1-1-1h-6v-2h2c.55 0 1-.45 1-1V7h2c1.1 0 2-.9 2-2v-.41C17.92 5.77 20 8.65 20 12c0 2.08-.81 3.98-2.11 5.4z"/>
<text x="1461.5" y="720" font-size="14.5" fill="#0b57d0">https://prnt.sc/nShA53ss...</text>
<path transform="translate(1653.5 707) scale(.7)" fill="#444746" d="M16 1H4c-1.1 0-2 .9-2 2v14h2V3h12V1zm3 4H8c-1.1 0-2 .9-2 2v14c0 1.1.9 2 2 2h11c1.1 0 2-.9 2-2V7c0-1.1-.9-2-2-2zm0 16H8V7h11v14z"/>
<path transform="translate(1683.5 707) scale(.7)" fill="#444746" d="M3 17.25V21h3.75L17.81 9.94l-3.75-3.75L3 17.25zM5.92 19H5v-.92l9.06-9.06.92.92L5.92 19zM20.71 7.04c.39-.39.39-1.02 0-1.41l-2.34-2.34c-.2-.2-.45-.29-.71-.29s-.51.1-.7.29l-1.83 1.83 3.75 3.75 1.83-1.83z"/>
<path d="M1716 709c3 0 5 2 5 5M1715 716l4 4" fill="none" stroke="#444746" stroke-width="2"/>
<!-- scroll arrows -->
<g fill="#9aa0a6">
<path d="M1715 897l3-3.500 3 3.500zM1715 910l3 3.500 3-3.500zM1690 924.500l-3.500 3 3.500 3zM1703 924.500l3.500 3-3.500 3z"/>
</g>
<path d="M1682 921v12M1698 921v12" stroke="#e3e3e3"/>
<path d="M1712.5 870v50" stroke="#e3e3e3"/>
<!-- bottom bar -->
<rect x="-4" y="934" width="24" height="36" fill="#e1e9f7"/>
<path d="M0 951h7l-3.500 3.500z" fill="#0b57d0"/>
<g fill="#444746" font-size="15">
<text x="32" y="958">Disputes</text><text x="141" y="958">BCH</text>
</g>
<path d="M108 951h8l-4 4zM182 951h8l-4 4z" fill="#444746"/>
<rect x="1536" y="937" width="121" height="30" rx="9" fill="#c4eed0"/>
<text x="1546" y="957" font-size="14.5" fill="#1f1f1f">Sum: ₱53.97</text>
<path d="M1636 950h8l-4 4z" fill="#1f1f1f"/>
<path d="M1700 949l-5 5 5 5" fill="none" stroke="#444746" stroke-width="1.8"/>
</svg>
</body></html>
